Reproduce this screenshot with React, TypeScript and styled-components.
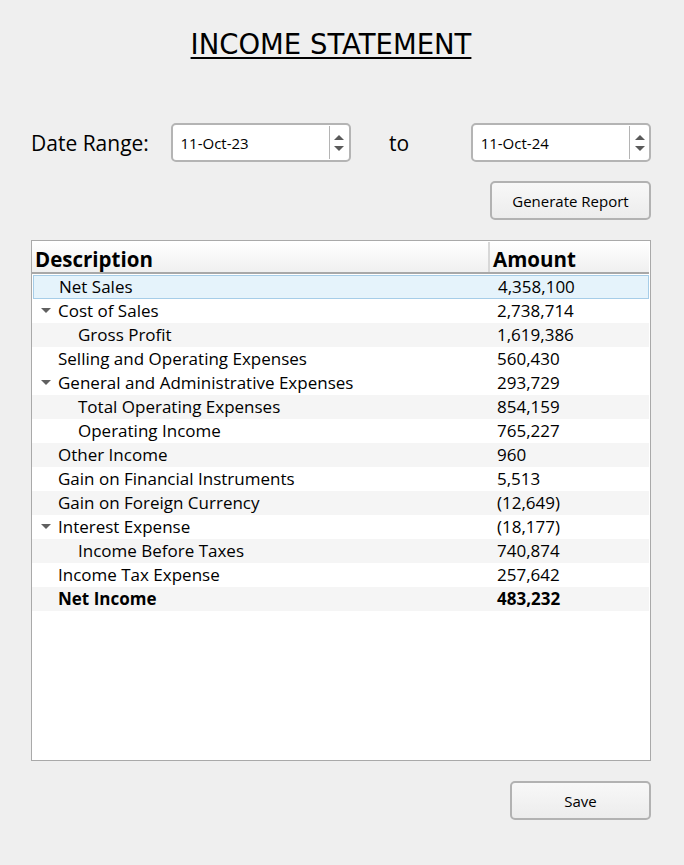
import React from 'react';
import styled, { createGlobalStyle } from 'styled-components';

const GlobalStyle = createGlobalStyle`
  html, body {
    margin: 0;
    padding: 0;
    background: #efefef;
  }
  body {
    font-family: 'Open Sans', 'Noto Sans', sans-serif;
  }
`;

type Row = {
  label: string;
  amount: string;
  level: 0 | 1;
  arrow?: boolean;
  alt?: boolean;
  bold?: boolean;
  selected?: boolean;
};

const rows: Row[] = [
  { label: 'Net Sales', amount: '4,358,100', level: 0, selected: true },
  { label: 'Cost of Sales', amount: '2,738,714', level: 0, arrow: true },
  { label: 'Gross Profit', amount: '1,619,386', level: 1, alt: true },
  { label: 'Selling and Operating Expenses', amount: '560,430', level: 0 },
  { label: 'General and Administrative Expenses', amount: '293,729', level: 0, arrow: true },
  { label: 'Total Operating Expenses', amount: '854,159', level: 1, alt: true },
  { label: 'Operating Income', amount: '765,227', level: 1 },
  { label: 'Other Income', amount: '960', level: 0, alt: true },
  { label: 'Gain on Financial Instruments', amount: '5,513', level: 0 },
  { label: 'Gain on Foreign Currency', amount: '(12,649)', level: 0, alt: true },
  { label: 'Interest Expense', amount: '(18,177)', level: 0, arrow: true },
  { label: 'Income Before Taxes', amount: '740,874', level: 1, alt: true },
  { label: 'Income Tax Expense', amount: '257,642', level: 0 },
  { label: 'Net Income', amount: '483,232', level: 0, alt: true, bold: true },
];

function SpinArrows() {
  return (
    <Spinner>
      <svg width="12" height="24" viewBox="0 0 12 24">
        <path d="M1 9 L6 4 L11 9 Z" fill="#5a5a5a" />
        <path d="M1 15 L6 20 L11 15 Z" fill="#5a5a5a" />
      </svg>
    </Spinner>
  );
}

function DateField({ value }: { value: string }) {
  return (
    <DateBox>
      <DateText>{value}</DateText>
      <SpinArrows />
    </DateBox>
  );
}

export default function App() {
  return (
    <>
      <GlobalStyle />
      <Window>
        <Title>INCOME STATEMENT</Title>
        <DateRow>
          <Label>Date Range:</Label>
          <DateField value="11-Oct-23" />
          <ToLabel>to</ToLabel>
          <DateField value="11-Oct-24" />
        </DateRow>
        <ButtonRow>
          <Button width={161}>Generate Report</Button>
        </ButtonRow>
        <Tree>
          <HeaderRow>
            <HeaderCell>Description</HeaderCell>
            <HeaderCell last>Amount</HeaderCell>
          </HeaderRow>
          {rows.map((r) => (
            <TreeRow key={r.label} alt={r.alt} selected={r.selected} bold={r.bold}>
              <DescCell>
                <Branch>
                  {r.arrow && (
                    <svg width="10" height="6" viewBox="0 0 10 6">
                      <path d="M0 0 L10 0 L5 5 Z" fill="#606060" />
                    </svg>
                  )}
                </Branch>
                <Indent level={r.level} />
                {r.label}
              </DescCell>
              <AmountCell>{r.amount}</AmountCell>
            </TreeRow>
          ))}
        </Tree>
        <ButtonRow bottom>
          <Button width={141}>Save</Button>
        </ButtonRow>
      </Window>
    </>
  );
}

const Window = styled.div`
  width: 684px;
  height: 865px;
  box-sizing: border-box;
  padding: 0 33px 0 31px;
  display: flex;
  flex-direction: column;
`;

const Title = styled.h1`
  margin: 26px 0 0 0;
  padding-right: 20px;
  font-family: 'DejaVu Sans', Tahoma, sans-serif;
  font-weight: normal;
  font-size: 27.5px;
  line-height: 36px;
  text-align: center;
  text-decoration: underline;
  text-decoration-thickness: 2px;
  text-underline-offset: 3px;
  color: #000;
`;

const DateRow = styled.div`
  margin-top: 61px;
  display: flex;
  align-items: center;
  height: 39px;
`;

const Label = styled.span`
  font-size: 21px;
  color: #000;
  width: 140px;
  padding-top: 1px;
`;

const ToLabel = styled.span`
  font-size: 21px;
  color: #000;
  width: 120px;
  padding-left: 38px;
  box-sizing: border-box;
  padding-top: 1px;
`;

const DateBox = styled.div`
  width: 181px;
  height: 39px;
  box-sizing: border-box;
  background: #fff;
  border: 2px solid #b4b4b4;
  border-radius: 5px;
  display: flex;
  align-items: stretch;
`;

const DateText = styled.span`
  flex: 1;
  font-size: 15px;
  padding-left: 8px;
  display: flex;
  align-items: center;
  color: #000;
  border-right: 1px solid #b4b4b4;
  margin: 1px 0;
`;

const Spinner = styled.div`
  width: 19px;
  display: flex;
  align-items: center;
  justify-content: center;
`;

const ButtonRow = styled.div<{ bottom?: boolean }>`
  display: flex;
  justify-content: flex-end;
  margin-top: ${({ bottom }) => (bottom ? '20px' : '19px')};
`;

const Button = styled.div<{ width: number }>`
  width: ${({ width }) => width}px;
  height: 39px;
  box-sizing: border-box;
  border: 2px solid #b2b2b2;
  border-radius: 5px;
  background: linear-gradient(#f8f8f8, #ececec);
  display: flex;
  align-items: center;
  justify-content: center;
  font-size: 15px;
  color: #000;
`;

const Tree = styled.div`
  margin-top: 20px;
  height: 521px;
  box-sizing: border-box;
  border: 1px solid #a9a9a9;
  background: #fff;
  padding-top: 1px;
`;

const HeaderRow = styled.div`
  display: grid;
  grid-template-columns: 458px 1fr;
  height: 32px;
  background: linear-gradient(#ffffff, #f0f0f0);
  border-bottom: 2px solid #a8a8a8;
  box-sizing: border-box;
  margin-right: 1px;
`;

const HeaderCell = styled.div<{ last?: boolean }>`
  font-size: 20.5px;
  font-weight: 700;
  color: #000;
  padding-left: 3px;
  display: flex;
  align-items: flex-end;
  line-height: 26px;
  border-right: ${({ last }) => (last ? 'none' : '2px solid #d8d8d8')};
`;

const TreeRow = styled.div<{ alt?: boolean; selected?: boolean; bold?: boolean }>`
  display: grid;
  grid-template-columns: 460px 1fr;
  height: 24px;
  box-sizing: border-box;
  margin: ${({ selected }) => (selected ? '1px 1px 0 1px' : '0 1px 0 0')};
  background: ${({ alt, selected }) =>
    selected ? '#e5f3fb' : alt ? '#f5f5f5' : '#ffffff'};
  outline: ${({ selected }) => (selected ? '1px solid #a6cde8' : 'none')};
  outline-offset: -1px;
  font-size: 17px;
  font-weight: ${({ bold }) => (bold ? 700 : 400)};
  color: #000;
  line-height: 22px;
`;

const DescCell = styled.div`
  display: flex;
  align-items: center;
  white-space: nowrap;
`;

const Branch = styled.span`
  width: 26px;
  display: flex;
  justify-content: center;
  padding-left: 2px;
  box-sizing: border-box;
`;

const Indent = styled.span<{ level: number }>`
  width: ${({ level }) => (level === 1 ? 20 : 0)}px;
`;

const AmountCell = styled.div`
  display: flex;
  align-items: center;
  padding-left: 5px;
`;
